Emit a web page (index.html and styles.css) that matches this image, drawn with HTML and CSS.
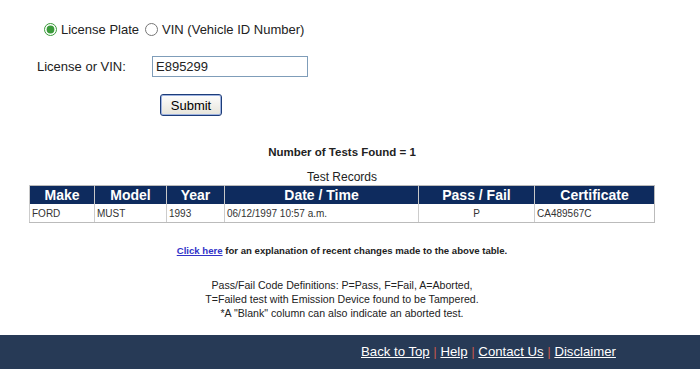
FILE: index.html
```html
<!DOCTYPE html>
<html lang="en">
<head>
    <meta charset="UTF-8">
    <title>Smog Check Test History</title>
    <link rel="stylesheet" href="styles.css">
</head>
<body>

    <form class="search-form">
        <div class="radio-row">
            <label><input type="radio" name="type" checked> License Plate</label>
            <label><input type="radio" name="type"> VIN (Vehicle ID Number)</label>
        </div>
        <div class="field-row">
            <span class="field-label">License or VIN:</span>
            <input type="text" class="field-input" value="E895299">
        </div>
        <div class="submit-row">
            <button type="button" class="btn-submit">Submit</button>
        </div>
    </form>

    <div class="results">
        <p class="found">Number of Tests Found = 1</p>
        <p class="caption">Test Records</p>
        <table>
            <thead>
                <tr>
                    <th class="c-make">Make</th>
                    <th class="c-model">Model</th>
                    <th class="c-year">Year</th>
                    <th class="c-date">Date / Time</th>
                    <th class="c-pass">Pass / Fail</th>
                    <th class="c-cert">Certificate</th>
                </tr>
            </thead>
            <tbody>
                <tr>
                    <td>FORD</td>
                    <td>MUST</td>
                    <td>1993</td>
                    <td>06/12/1997 10:57 a.m.</td>
                    <td class="center">P</td>
                    <td>CA489567C</td>
                </tr>
            </tbody>
        </table>

        <p class="changes"><a href="#">Click here</a> for an explanation of recent changes made to the above table.</p>

        <p class="codes">
            Pass/Fail Code Definitions: P=Pass, F=Fail, A=Aborted,<br>
            T=Failed test with Emission Device found to be Tampered.<br>
            *A "Blank" column can also indicate an aborted test.
        </p>
    </div>

    <div class="footer">
        <a href="#">Back to Top</a> <span class="sep">|</span>
        <a href="#">Help</a> <span class="sep">|</span>
        <a href="#">Contact Us</a> <span class="sep">|</span>
        <a href="#">Disclaimer</a>
    </div>

</body>
</html>
```

FILE: styles.css
```css
body {
    margin: 0;
    font-family: Arial, "Liberation Sans", sans-serif;
    color: #222;
    background: #fff;
}

.search-form {
    padding-top: 21px;
    font-size: 13px;
}

.radio-row {
    padding-left: 42px;
    height: 16px;
    display: flex;
    align-items: center;
    gap: 4px;
}

.radio-row label {
    display: flex;
    align-items: center;
}

.radio-row input {
    margin: 0 4px 0 2px;
    width: 13px;
    height: 13px;
    accent-color: #3a9a3a;
}

.field-row {
    margin-top: 19px;
    display: flex;
    align-items: center;
    height: 21px;
}

.field-label {
    padding-left: 37px;
    width: 115px;
}

.field-input {
    box-sizing: border-box;
    width: 156px;
    height: 21px;
    margin: 0;
    padding: 1px 3px;
    border: 1px solid #7f9db9;
    font-family: Arial, "Liberation Sans", sans-serif;
    font-size: 13px;
    color: #222;
}

.submit-row {
    margin-top: 17px;
    padding-left: 160px;
}

.btn-submit {
    width: 62px;
    height: 22px;
    padding: 0;
    border: 1px solid #1c3c78;
    border-radius: 3px;
    background: linear-gradient(#fdfdfd, #e6e4da);
    box-shadow: inset 0 0 0 1px #9db2e0;
    font-family: Arial, "Liberation Sans", sans-serif;
    font-size: 13px;
    color: #000;
}

.results {
    width: 626px;
    margin-left: 29px;
    text-align: center;
}

.found {
    margin: 29px 0 0;
    font-size: 11.5px;
    font-weight: bold;
    line-height: 14px;
}

.caption {
    margin: 11px 0 0;
    font-size: 12px;
    line-height: 15px;
}

table {
    width: 626px;
    border-collapse: collapse;
    border: 1px solid #bbb;
}

th {
    background: #0e2b5e;
    color: #fff;
    font-size: 14px;
    font-weight: bold;
    height: 18px;
    padding: 0;
    border-left: 1px solid #c8c8c8;
    line-height: 18px;
}

td {
    font-size: 10px;
    color: #333;
    text-align: left;
    height: 18px;
    padding: 0 2px;
    border-left: 1px solid #ccc;
    border-bottom: 1px solid #bbb;
}

td.center {
    text-align: center;
}

.c-make { width: 64px; }
.c-model { width: 71px; }
.c-year { width: 57px; }
.c-date { width: 193px; }
.c-pass { width: 115px; }

.changes {
    margin: 21px 0 0;
    font-size: 9.6px;
    font-weight: bold;
    line-height: 13px;
}

.changes a {
    color: #3232c8;
}

.codes {
    margin: 21px 0 0;
    font-size: 10.6px;
    line-height: 14px;
}

.footer {
    margin-top: 15px;
    height: 34px;
    background: #273a56;
    padding-left: 361px;
    font-size: 13.2px;
    line-height: 34px;
    color: #fff;
}

.footer a {
    color: #fff;
}

.footer .sep {
    color: #c0584c;
}
```
